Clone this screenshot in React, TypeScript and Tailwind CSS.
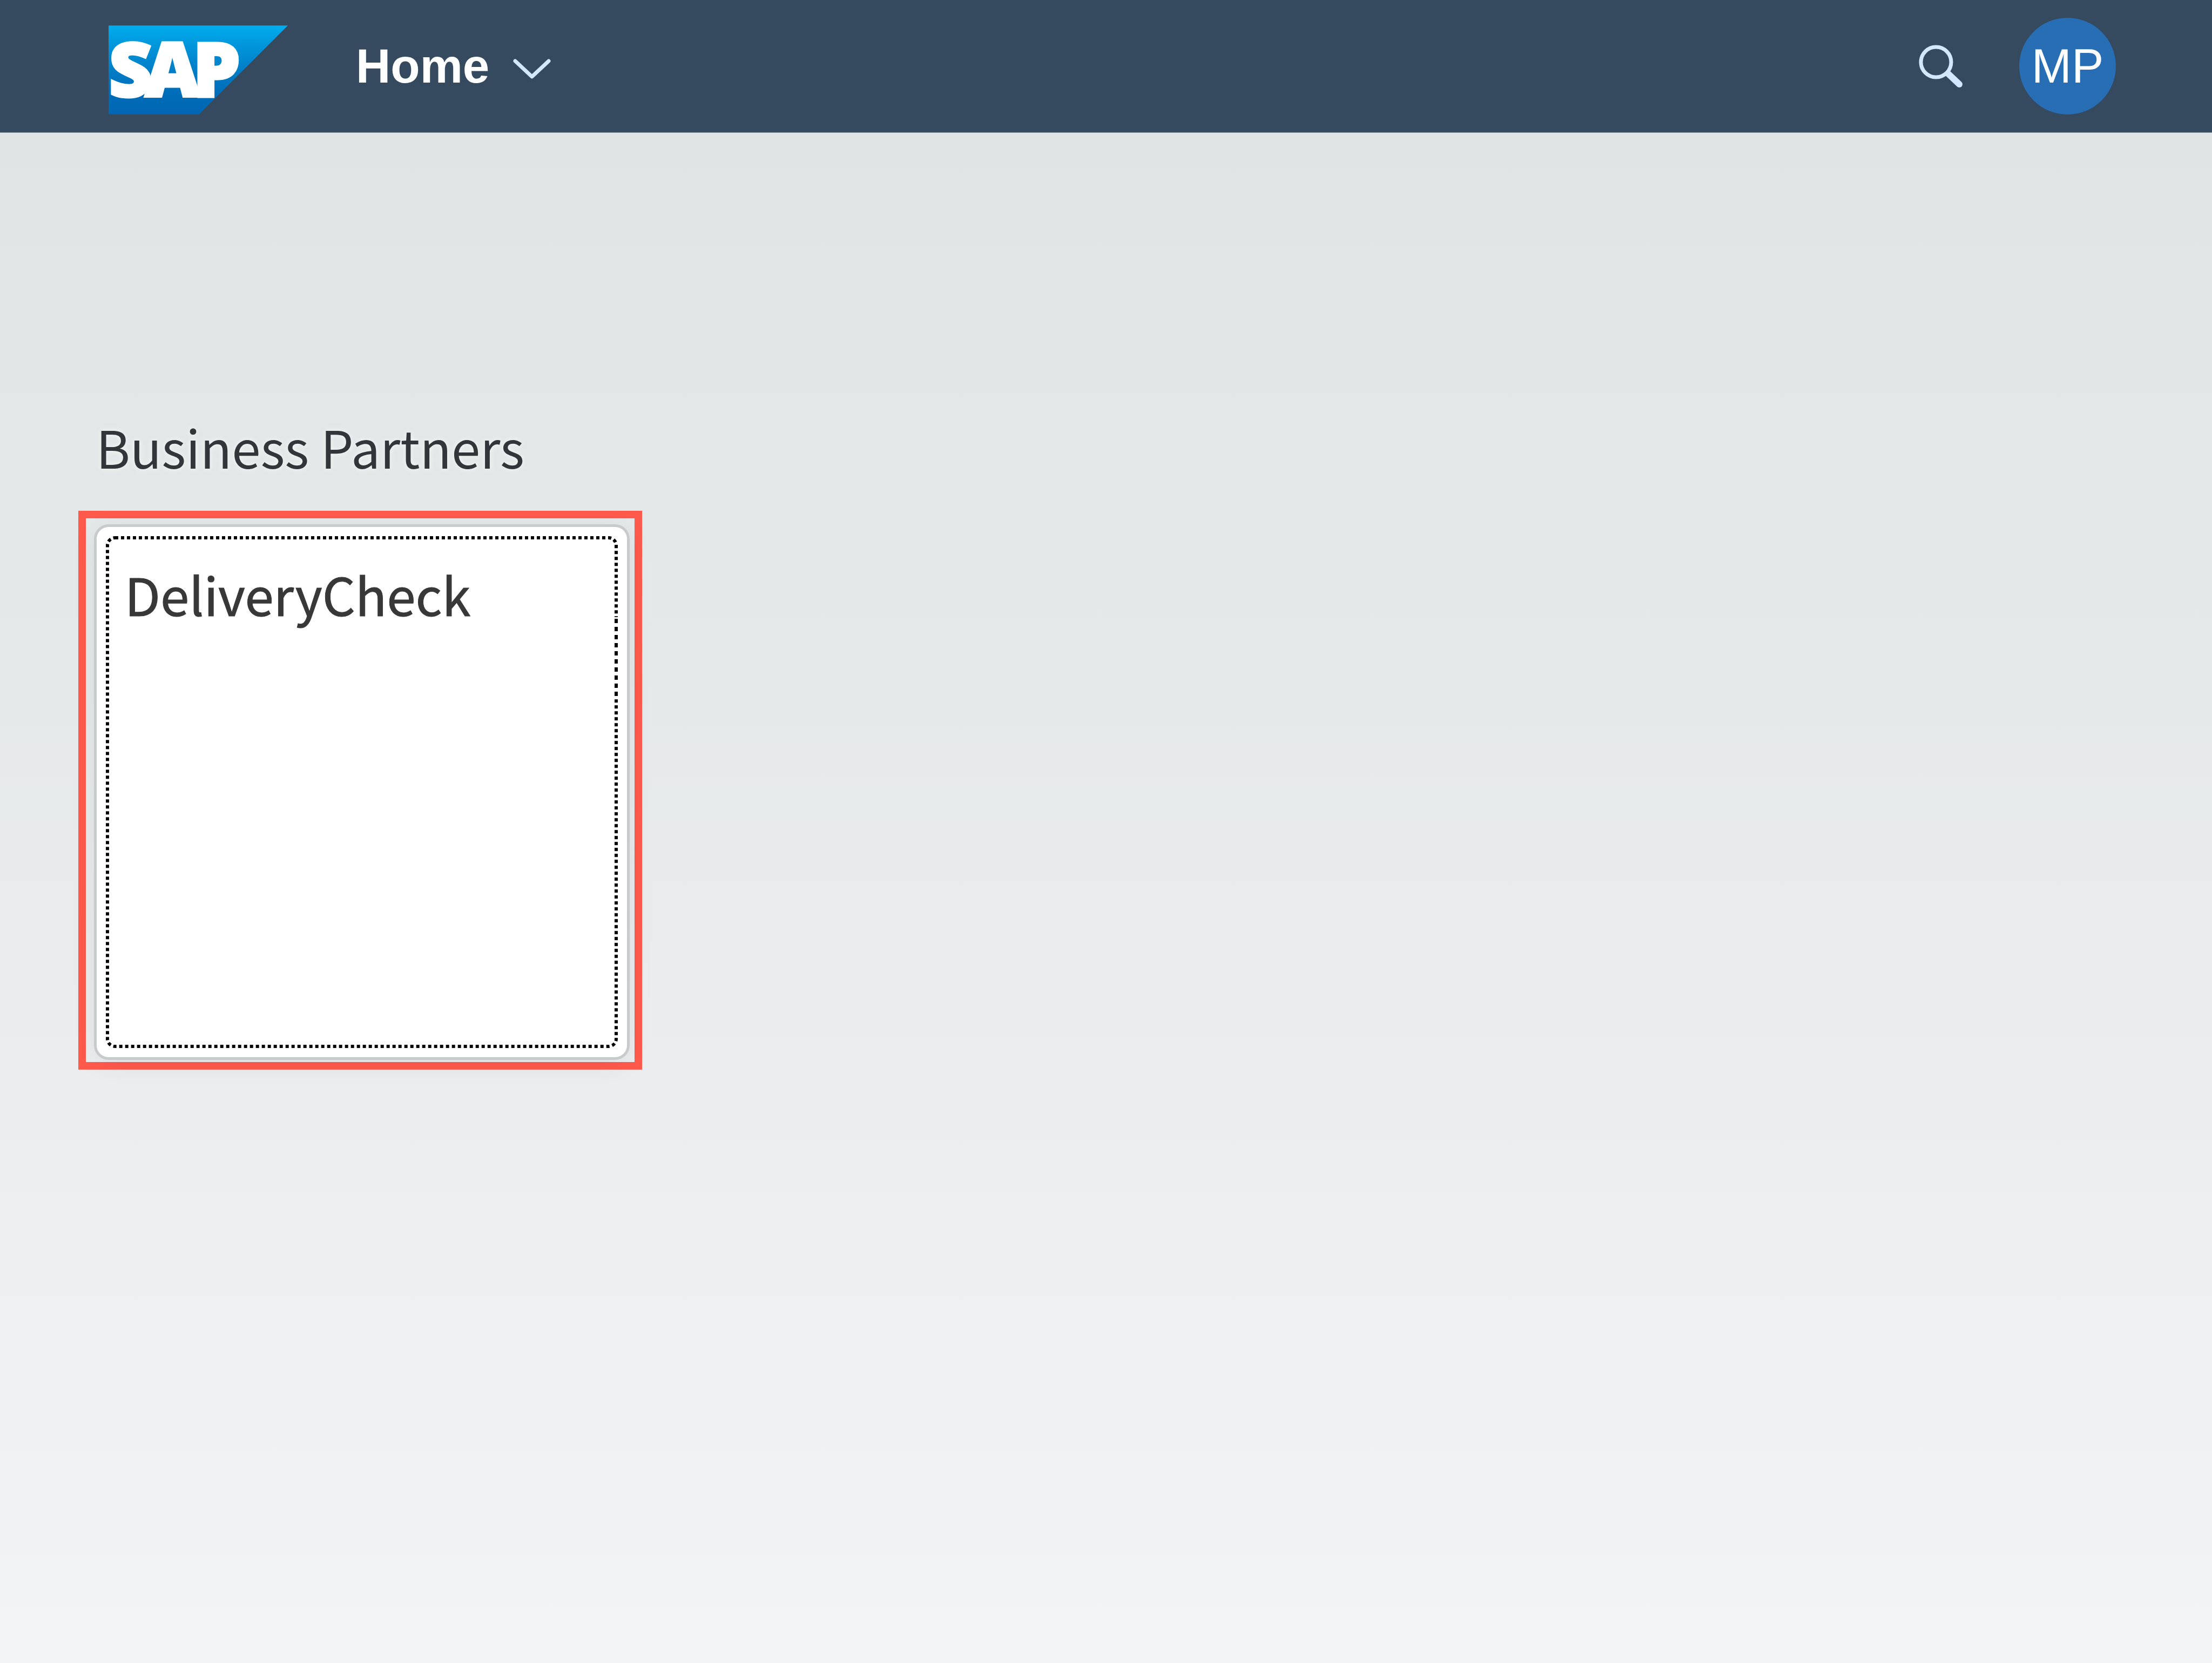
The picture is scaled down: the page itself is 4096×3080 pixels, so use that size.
function SapLogo() {
  return (
    <svg viewBox="0 0 412 204" className="h-[165px] w-[332px] overflow-visible" role="img" aria-label="SAP">
      <defs>
        <linearGradient id="sap-blue" x1="0" y1="0" x2="0" y2="1">
          <stop offset="0" stopColor="#00aeef" />
          <stop offset="0.21" stopColor="#0097dc" />
          <stop offset="0.52" stopColor="#007cc5" />
          <stop offset="0.79" stopColor="#006cb8" />
          <stop offset="1" stopColor="#0066b3" />
        </linearGradient>
      </defs>
      <polygon points="0,0 412,0 208,204 0,204" fill="url(#sap-blue)" />
      <text
        x="1 84 194"
        y="163"
        fill="#fff"
        stroke="#fff"
        strokeWidth="6"
        fontSize="172"
        fontWeight="800"
        fontFamily='"Open Sans", sans-serif'
      >
        SAP
      </text>
    </svg>
  );
}

function ChevronDown() {
  return (
    <svg viewBox="0 0 70 38" className="h-[38px] w-[70px]" fill="none" aria-hidden="true">
      <path
        d="M4 4 L35 33 L66 4"
        stroke="#d1e8ff"
        strokeWidth="7"
        strokeLinecap="round"
        strokeLinejoin="round"
      />
    </svg>
  );
}

function SearchIcon() {
  return (
    <svg viewBox="0 0 82 80" className="h-[80px] w-[82px]" fill="none" aria-hidden="true">
      <circle cx="32" cy="32" r="28" stroke="#d1e8ff" strokeWidth="7" />
      <path d="M55 54 L75 73" stroke="#d1e8ff" strokeWidth="12" strokeLinecap="round" />
    </svg>
  );
}

function FocusFrame() {
  return (
    <svg
      className="pointer-events-none absolute top-[20px] left-[20px] h-[calc(100%-40px)] w-[calc(100%-40px)] overflow-visible"
      fill="none"
      aria-hidden="true"
    >
      <rect width="100%" height="100%" rx="14" stroke="#000" strokeWidth="6" strokeDasharray="6 5" />
      <line x1="100%" x2="100%" y1="147" y2="298" stroke="#fff" strokeWidth="8" />
      <line x1="100%" x2="100%" y1="150" y2="298" stroke="#000" strokeWidth="6" strokeDasharray="8 7" />
    </svg>
  );
}

export default function App() {
  return (
    <div className="flex min-h-screen flex-col bg-linear-to-b from-[#dfe4e4] from-5% via-[#e9ebec] via-55% to-[#f2f4f6] font-['Noto_Sans_CJK_SC',sans-serif]">
      <header className="flex h-[246px] items-center border-b border-[#8795a1] bg-[#354a5f] pr-[178px] pl-[201px] font-['Liberation_Sans',sans-serif]">
        <a href="#home" className="mt-[14px]">
          <SapLogo />
        </a>
        <button
          type="button"
          className="ml-[126px] flex items-center gap-[44px] text-[89px] leading-none font-bold text-white"
        >
          Home
          <span className="mt-[10px]">
            <ChevronDown />
          </span>
        </button>
        <div className="ml-auto flex items-center gap-[104px]">
          <button type="button" aria-label="Search">
            <SearchIcon />
          </button>
          <button
            type="button"
            className="flex size-[179px] items-center justify-center rounded-full bg-[#286eb4] text-[89px] leading-none text-white"
          >
            MP
          </button>
        </div>
      </header>

      <main className="px-[145px] pt-[533px]">
        <h2 className="pl-[33px] text-[96px] leading-none font-normal text-[#32363a] [text-shadow:0_0_10px_#f8f8f8]">
          Business Partners
        </h2>
        <div className="mt-[71px] w-fit border-[14px] border-[#ff5a4c] pt-[16px] pr-[14px] pb-[9px] pl-[20px]">
          <a
            href="#delivery-check"
            className="relative block size-[982px] rounded-[22px] bg-white pt-[76px] pl-[52px] shadow-[0_0_0_5px_#c8cbcc,0_10px_50px_rgba(0,0,0,0.08)]"
          >
            <FocusFrame />
            <h3 className="text-[96px] leading-none font-normal text-[#383838] [-webkit-text-stroke:1px_#383838]">
              DeliveryCheck
            </h3>
          </a>
        </div>
      </main>
    </div>
  );
}
